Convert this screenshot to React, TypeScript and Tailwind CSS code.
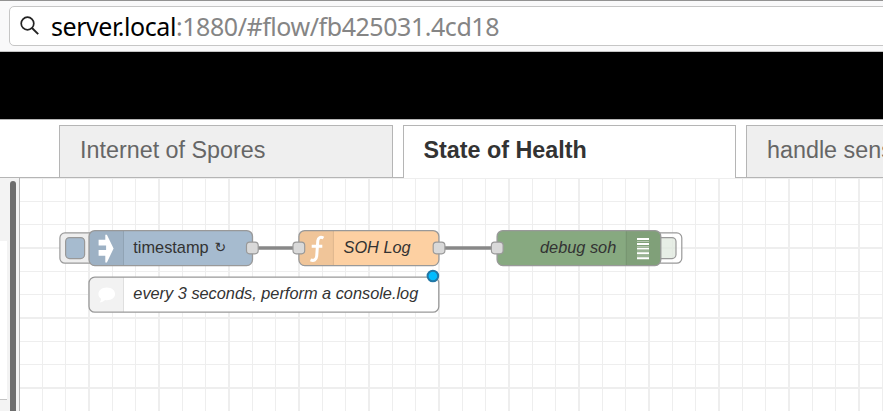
import type { ReactNode } from "react";

const STROKE = "#999";

function AddressBar() {
  return (
    <header className="flex h-[52px] shrink-0 items-center overflow-hidden border-t border-b border-t-[#929292] border-b-[#c4c4c4] bg-[#f9f9fa] pl-[9px]">
      <div className="flex h-10 w-[900px] shrink-0 items-center rounded-[5px] border border-[#c6c6c6] bg-white pl-[10px]">
        <svg width="20" height="20" viewBox="0 0 20 20" fill="none" stroke="#222" className="shrink-0">
          <circle cx="7.5" cy="7.5" r="6.3" strokeWidth="1.7" />
          <path d="M12 12l6.2 6.2" strokeWidth="1.9" />
        </svg>
        <div className="ml-[11px] flex font-['Noto_Sans',sans-serif] text-[25px] leading-none whitespace-pre">
          <span className="w-[125px] tracking-[-0.45px] text-black">server.local</span>
          <span className="tracking-[-0.45px] text-[#858585]">:1880/#flow/fb425031.4cd18</span>
        </div>
      </div>
    </header>
  );
}

function Tab({ label, active }: { label: string; active?: boolean }) {
  return (
    <div
      className={
        active
          ? "flex h-[53px] w-[333px] shrink-0 items-center border border-b-0 border-[#b5b5b5] bg-white pb-[3px] pl-[19.5px] font-bold text-[#333]"
          : "flex h-[53px] w-[334px] shrink-0 items-center border border-[#b5b5b5] bg-[#efefef] pb-[2px] pl-[20px] text-[#666]"
      }
    >
      {label}
    </div>
  );
}

function Tabs() {
  return (
    <nav className="flex h-[59px] shrink-0 items-end overflow-hidden border-t border-[#b5b5b5] bg-white font-['Liberation_Sans',sans-serif] text-[23.33px] leading-none whitespace-nowrap">
      <div className="h-px w-[59px] shrink-0 bg-[#b5b5b5]" />
      <Tab label="Internet of Spores" />
      <div className="h-px w-[10px] shrink-0 bg-[#b5b5b5]" />
      <Tab label="State of Health" active />
      <div className="h-px w-[10px] shrink-0 bg-[#b5b5b5]" />
      <Tab label="handle sensor data" />
    </nav>
  );
}

function Palette() {
  return (
    <aside className="flex w-5 shrink-0 border-r border-[#b5b5b5] bg-[#f3f3f3]">
      <div className="flex w-[7px] flex-col">
        <div className="h-[63px]" />
        <div className="h-[159px] border-b border-[#c4c4c4] bg-white" />
      </div>
      <div className="mt-[3px] ml-[3px] w-[6px] rounded-t-full bg-[#6e6e6e]" />
    </aside>
  );
}

function Port({ x }: { x: number }) {
  return <rect x={x - 5.8} y={242.1} width={11.7} height={11.7} rx={3.2} fill="#d9d9d9" stroke={STROKE} strokeWidth={1.17} />;
}

function FlowNode({ x, y, width, fill, iconAt = "left", children }: {
  x: number; y: number; width: number; fill: string; iconAt?: "left" | "right"; children: ReactNode;
}) {
  const left = iconAt === "left";
  const outer = left ? x : x + width;
  const inner = left ? x + 35 : x + width - 35;
  const s = left ? 1 : -1;
  return (
    <g>
      <rect x={x} y={y} width={width} height={35} rx={5.8} fill={fill} />
      <path
        d={`M${inner} ${y}H${outer + s * 5.8}Q${outer} ${y} ${outer} ${y + 5.8}V${y + 29.2}Q${outer} ${y + 35} ${outer + s * 5.8} ${y + 35}H${inner}Z`}
        fill="#000"
        fillOpacity={0.05}
      />
      <path d={`M${inner - s * 0.5} ${y}v35`} stroke="#000" strokeOpacity={0.08} />
      <rect x={x} y={y} width={width} height={35} rx={5.8} fill="none" stroke={STROKE} strokeWidth={1.3} />
      {children}
    </g>
  );
}

function Workspace() {
  return (
    <svg width="863" height="233" viewBox="20 178 863 233" className="block shrink-0 font-['Liberation_Sans',sans-serif] text-[16.33px]">
      <defs>
        <pattern id="grid" x="88" y="177" width="70" height="70" patternUnits="userSpaceOnUse">
          <path d="M0 0h70v2H0zM0 24h70v1H0zM0 47h70v1H0zM0 0h2v70H0zM24 0h1v70h-1zM47 0h1v70h-1z" fill="#eee" />
        </pattern>
      </defs>
      <rect x="20" y="178" width="863" height="233" fill="#fff" />
      <rect x="20" y="178" width="863" height="233" fill="url(#grid)" shapeRendering="crispEdges" />

      <path d="M252.3 248H298.6M438.8 248H497" stroke="#888" strokeWidth="3.5" />

      <rect x="59.9" y="232.9" width="40" height="30.3" rx="5" fill="#eee" stroke={STROKE} strokeWidth="1.2" />
      <rect x="65.6" y="237.6" width="19" height="21" rx="4" fill="#a6bbcf" stroke={STROKE} strokeWidth="1.2" />
      <FlowNode x={89} y={230.6} width={163.5} fill="#a6bbcf">
        <path d="M98.6 239.8h6.7v-5h1.6l6.7 13.700-6.700 13.900h-1.600v-6.700h-6.700v-5.700h7.500v-4.500h-7.500z" fill="#fff" />
        <text x="133.300" y="253.200" fill="#333">timestamp</text>
        <text x="214.500" y="252.200" fill="#333" className="font-['DejaVu_Sans',sans-serif] text-[14px]">↻</text>
      </FlowNode>
      <Port x={252.3} />

      <FlowNode x={298.9} y={230.6} width={140} fill="#fdd0a2">
        <path d="M323.500 238c-2.900-1.500-5.400-.700-5.700 2.700l-1.100 15.500c-.3 3.500-2.800 5-6.200 3.700M311.700 246.200h10.600" fill="none" stroke="#fff" strokeWidth="3" strokeLinejoin="round" />
        <text x="343.500" y="253.200" fill="#333" className="italic">SOH Log</text>
      </FlowNode>
      <Port x={298.8} />
      <Port x={439} />

      <rect x="641" y="232.9" width="40.8" height="30.3" rx="5" fill="#fff" fillOpacity="0.7" stroke={STROKE} strokeWidth="1.2" />
      <rect x="655" y="237.6" width="21" height="21" rx="4" fill="#87a980" fillOpacity="0.2" stroke={STROKE} strokeWidth="1.2" />
      <FlowNode x={497.1} y={230.6} width={163.7} fill="#87a980" iconAt="right">
        <path d="M637 239h12M637 244h12M637 248.600h12M637 253.300h12M637 258.300h12" stroke="#fff" strokeWidth="1.9" />
        <path d="M637 241.500h12M637 246.500h12M637 251h12M637 256h12" stroke="#fff" strokeOpacity="0.4" strokeWidth="1" />
        <text x="540" y="253.200" fill="#333" className="italic">debug soh</text>
      </FlowNode>
      <Port x={497.2} />

      <FlowNode x={89} y={277.2} width={349.8} fill="#fff">
        <path d="M106.800 287.500c5 0 8.300 2.900 8.300 6.500 0 3.700-3.700 6.200-8 6.200-.7 0-1.400 0-2-.2-1.600 1.600-3.400 2.400-5.600 2.500 1-.9 1.700-2.200 1.600-3.700-1.700-1.100-2.700-2.800-2.700-4.800 0-3.600 3.400-6.500 8.400-6.500z" fill="#fff" />
        <text x="133.300" y="299.400" fill="#333" className="italic">every 3 seconds, perform a console.log</text>
      </FlowNode>
      <circle cx="432.900" cy="276" r="5.300" fill="#00bcff" stroke="#2277a5" strokeWidth="2" />
    </svg>
  );
}

export default function App() {
  return (
    <div className="flex h-[411px] w-[883px] flex-col overflow-hidden bg-white">
      <AddressBar />
      <div className="h-[67px] shrink-0 bg-black" />
      <Tabs />
      <main className="flex h-[233px]">
        <Palette />
        <Workspace />
      </main>
    </div>
  );
}
